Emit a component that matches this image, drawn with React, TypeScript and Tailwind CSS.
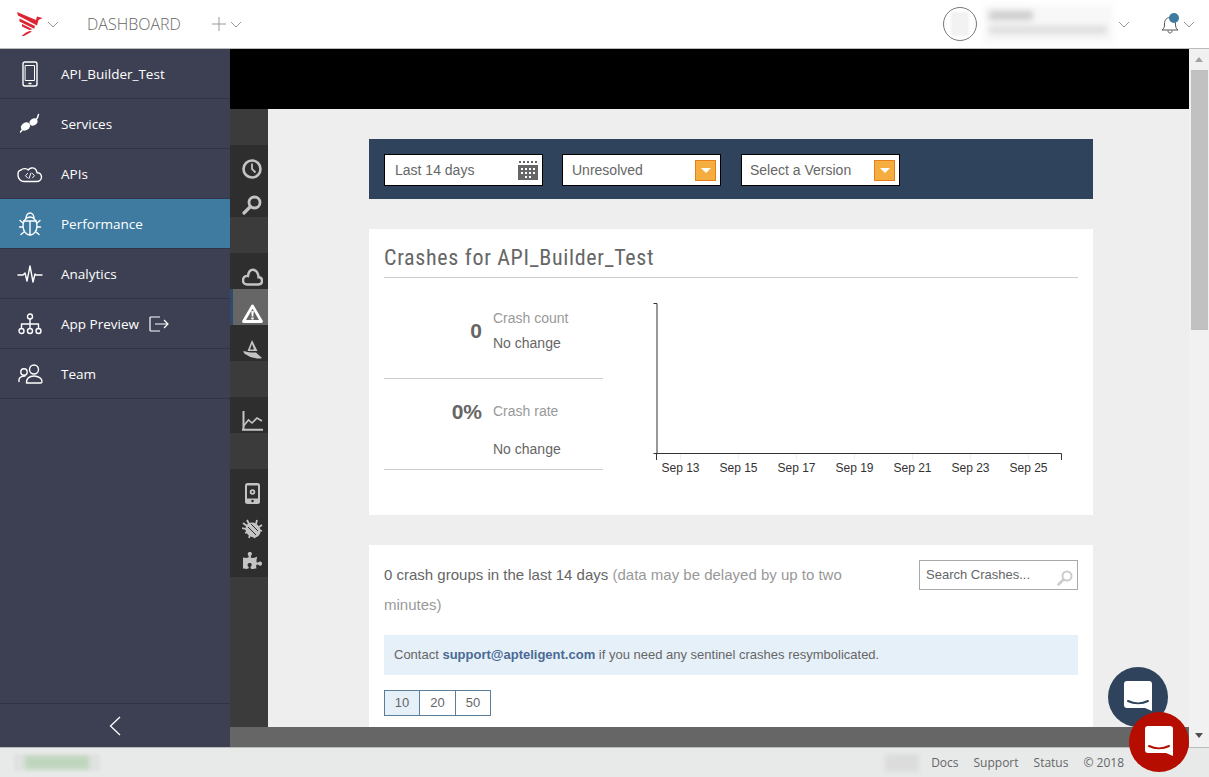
import { FaPuzzlePiece } from 'react-icons/fa';

const sans = 'font-["Open_Sans",sans-serif]';

function Chevron({ className = '' }: { className?: string }) {
  return (
    <svg width="12" height="7" viewBox="0 0 12 7" fill="none" stroke="#999" strokeWidth="1" className={className}>
      <path d="M1 1l5 5 5-5" />
    </svg>
  );
}

function Logo() {
  return (
    <svg width="26" height="24" viewBox="0 0 26 24" fill="#dc2433">
      <path d="M0 0l19 8 1-3.500 5.500 1.500-4 2-1.500 5.500L1 3.500z" />
      <path d="M2.500 6.500l15.500 7.500-.8 2.800L2.500 9.500z" />
      <path d="M5 12l10.500 5.300-3 .8L5 14.500z" />
      <path d="M12.500 19l2.500 .5L7 24H4.500l4.500-3.500z" />
    </svg>
  );
}

const ic = { fill: 'none', stroke: '#fff', strokeWidth: 1.4, strokeLinecap: 'round', strokeLinejoin: 'round' } as const;

const sideIcons: Record<string, React.ReactNode> = {
  phone: (
    <svg width="24" height="26" viewBox="0 0 24 26" {...ic}>
      <rect x="5" y="1" width="14" height="24" rx="2" stroke="#fff" />
      <rect x="7.5" y="4.5" width="9" height="15" stroke="#fff" strokeWidth="1" />
      <path d="M11 22.5h2" />
    </svg>
  ),
  plug: (
    <svg width="24" height="24" viewBox="0 0 24 24" fill="#fff">
      <ellipse cx="7.500" cy="14.500" rx="5" ry="3.800" transform="rotate(-35 7.500 14.500)" />
      <ellipse cx="15.500" cy="10" rx="4.200" ry="3.300" transform="rotate(-35 15.500 10)" />
      <path d="M18 8c1.500-1.500 2-3 2.500-5.500M2.500 20l2-2.500" fill="none" stroke="#fff" strokeWidth="1.400" strokeLinecap="round" />
    </svg>
  ),
  cloud: (
    <svg width="26" height="18" viewBox="0 0 26 18" {...ic}>
      <path d="M7 16.500h12.500c3 0 5-2 5-4.500s-2-4.500-4.500-4.300C19.500 4 17 2.500 14.500 3c-1.500.3-2.500 1-3.200 2C10 3.500 6 2.800 4 5c-3 .8-3 2.500-3 5 0 4 3 6.500 6 6.500z" />
      <path d="M10.500 8.500l-2 2.200 2 2.200M15.500 8.500l2 2.200-2 2.200M14 8l-2 5.500" strokeWidth="1" />
    </svg>
  ),
  bug: (
    <svg width="24" height="26" viewBox="0 0 24 26" {...ic}>
      <ellipse cx="12" cy="15" rx="7" ry="9" />
      <path d="M8 7.500C8 4 10 2 12 2s4 2 4 5.500M5.500 10h13M12 10v14" />
      <path d="M5 12L2 9.500M19 12l3-2.500M4.800 16H1.500M19.200 16h3.300M6 21l-3 2.500M18 21l3 2.500" />
    </svg>
  ),
  pulse: (
    <svg width="26" height="18" viewBox="0 0 26 18" {...ic}>
      <path d="M1 10h5l2-2 2 8 3-15 3 16 2-8 1 1h6" />
    </svg>
  ),
  tree: (
    <svg width="24" height="22" viewBox="0 0 24 22" {...ic}>
      <circle cx="12" cy="3.500" r="2.500" />
      <circle cx="3.500" cy="18" r="2.500" />
      <circle cx="12" cy="18" r="2.500" />
      <circle cx="20.500" cy="18" r="2.500" />
      <path d="M12 6v9.500M3.500 15.500V11h17v4.500" />
    </svg>
  ),
  team: (
    <svg width="25" height="20" viewBox="0 0 25 20" {...ic}>
      <circle cx="16" cy="5.500" r="4.500" />
      <path d="M8.500 19c0-4.500 3-7 7.500-7s8 2.500 8 5.500c0 1-.5 1.500-1.500 1.500z" />
      <circle cx="6" cy="8" r="3.200" />
      <path d="M1 17.500c-.5-3.500 1.500-5.500 6-5.500" />
    </svg>
  ),
};

const navItems = [
  { label: 'API_Builder_Test', icon: 'phone' },
  { label: 'Services', icon: 'plug' },
  { label: 'APIs', icon: 'cloud' },
  { label: 'Performance', icon: 'bug', active: true },
  { label: 'Analytics', icon: 'pulse' },
  { label: 'App Preview', icon: 'tree', exit: true },
  { label: 'Team', icon: 'team' },
];

function Sidebar() {
  return (
    <aside className={`flex w-[230px] shrink-0 flex-col bg-[#3d4052] ${sans}`}>
      {navItems.map((item) => (
        <div
          key={item.label}
          className={`flex h-[50px] items-center border-b border-[#30334a] text-[13.5px] text-white ${item.active ? 'bg-[#3f7ba0]' : ''}`}
        >
          <div className="flex w-[61px] justify-center pr-[1px]">{sideIcons[item.icon]}</div>
          <span className="pt-[1px]">{item.label}</span>
          {item.exit && (
            <svg width="20" height="16" viewBox="0 0 20 16" fill="none" stroke="#fff" strokeWidth="1.200" className="ml-[10px]">
              <path d="M11 1H2a1 1 0 0 0-1 1v12a1 1 0 0 0 1 1h9M6 8h13M15 4l4 4-4 4" />
            </svg>
          )}
        </div>
      ))}
      <div className="flex-1" />
      <div className="flex h-[44px] items-center justify-center border-t border-[#30334a]">
        <svg width="12" height="20" viewBox="0 0 12 20" fill="none" stroke="#fff" strokeWidth="1.300">
          <path d="M11 1L1.500 10l9.500 9" />
        </svg>
      </div>
    </aside>
  );
}

const g = '#c4c4c4';

function RailBand({ light, h, children, className = '' }: { light?: boolean; h: string; children?: React.ReactNode; className?: string }) {
  return <div className={`flex flex-col items-center ${h} ${light ? 'bg-[#3b3b3b]' : 'bg-[#2e2e2e]'} ${className}`}>{children}</div>;
}

function RailSlot({ children }: { children: React.ReactNode }) {
  return <div className="flex h-[36px] w-full items-center justify-center pt-[12px] pl-[6px]">{children}</div>;
}

function Rail() {
  return (
    <div className="flex w-[38px] shrink-0 flex-col bg-[#3b3b3b]">
      <RailBand light h="h-[36px]" />
      <RailBand h="h-[72px]">
        <RailSlot>
          <svg width="20" height="20" viewBox="0 0 20 20" fill="none" stroke={g} strokeWidth="2.600">
            <circle cx="10" cy="10" r="8.500" />
            <path d="M10 4.500V10l3.500 3.500" strokeWidth="1.800" />
          </svg>
        </RailSlot>
        <RailSlot>
          <svg width="20" height="20" viewBox="0 0 20 20" fill="none" stroke={g} strokeWidth="2.800" strokeLinecap="round">
            <circle cx="12.500" cy="7.500" r="5.500" />
            <path d="M8.500 11.500L2 18" strokeWidth="3.200" />
          </svg>
        </RailSlot>
      </RailBand>
      <RailBand light h="h-[36px]" />
      <RailBand h="h-[108px]">
        <RailSlot>
          <svg width="21" height="18" viewBox="0 0 21 18" fill="none" stroke={g} strokeWidth="2.400">
            <path d="M5 16.500h11c2.500 0 4-1.500 4-3.700 0-2-1.500-3.500-3.500-3.500 0-4-2.500-7.500-5.500-7.500S6.500 4 6 8c-3-.5-5 1.500-5 4.300 0 2.700 2 4.200 4 4.200z" />
          </svg>
        </RailSlot>
        <div className="flex h-[36px] w-full items-center justify-center border-l-[3px] border-[#2f4a6b] bg-[#666] pt-[12px] pl-[3px]">
          <svg width="21" height="19" viewBox="0 0 21 19">
            <path d="M10.500 2L1.500 17.500h18z" fill="none" stroke="#fff" strokeWidth="2.800" strokeLinejoin="round" />
            <path d="M9.300 7h2.400l-.4 5.500H9.700zM9.300 13.500h2.400v2H9.300z" fill="#fff" />
          </svg>
        </div>
        <RailSlot>
          <svg width="21" height="19" viewBox="0 0 21 19" fill={g}>
            <path d="M10 0l5.500 11H5.500zM10 4L8 9.500h4z" fillRule="evenodd" />
            <path d="M1 11.500c3-1 5 1.500 9 1h4l6 5.500c-3 1-5 .5-7 0-4-.5-7-2-8-3-2-.5-3-2-4-3.500z" />
          </svg>
        </RailSlot>
      </RailBand>
      <RailBand light h="h-[36px]" />
      <RailBand h="h-[36px]">
        <RailSlot>
          <svg width="21" height="20" viewBox="0 0 21 20" fill="none" stroke={g} strokeWidth="2">
            <path d="M1.500 0v18M0 18.700h21" />
            <path d="M1.500 15l5-6 3.500 3 5-5 5 3" strokeWidth="1.600" />
          </svg>
        </RailSlot>
      </RailBand>
      <RailBand light h="h-[36px]" />
      <RailBand h="h-[108px]">
        <RailSlot>
          <svg width="15" height="21" viewBox="0 0 15 21">
            <rect x="0" y="0" width="15" height="21" rx="2.500" fill={g} />
            <rect x="2" y="2.500" width="11" height="13" fill="#2e2e2e" />
            <circle cx="7.500" cy="9" r="2.800" fill={g} />
            <circle cx="7.500" cy="9" r="1" fill="#2e2e2e" />
            <circle cx="7.500" cy="18" r="1.300" fill="#2e2e2e" />
          </svg>
        </RailSlot>
        <RailSlot>
          <svg width="21" height="20" viewBox="0 0 21 20" fill="none" stroke={g}>
            <ellipse cx="11" cy="11" rx="8" ry="7" transform="rotate(40 11 11)" fill={g} stroke="none" />
            <path d="M6 8l8 8M9 5l7 7" stroke="#2e2e2e" strokeWidth="1" />
            <path d="M1 4l4 3M5 1l2 4M0 9l4 1M15 1l-1 4M20 6l-3 2M20 12l-3-1M3 14l3-1M7 19l1-3M13 19l-1-2" strokeWidth="1.800" />
          </svg>
        </RailSlot>
        <div className="flex h-[36px] w-full items-center justify-center pt-[2px] pl-[6px]">
          <FaPuzzlePiece size={19} color={g} />
        </div>
      </RailBand>
      <div className="flex-1" />
    </div>
  );
}

function OrangeCaret() {
  return (
    <div className="flex h-[21px] w-[21px] items-center justify-center border border-[#e67e1a] bg-[#f5ad40]">
      <div className="h-0 w-0 border-x-[5px] border-t-[5px] border-x-transparent border-t-white" />
    </div>
  );
}

function Calendar() {
  return (
    <svg width="20" height="20" viewBox="0 0 20 20" fill="#666">
      <path d="M1 1h2v2H1zM5 1h2v2H5zM9 1h2v2H9zM13 1h2v2h-2zM17 1h2v2h-2z" />
      <path d="M0 5h20v15H0zM3 8v2h2V8zM7 8v2h2V8zM11 8v2h2V8zM15 8v2h2V8zM3 12v2h2v-2zM7 12v2h2v-2zM11 12v2h2v-2zM15 12v2h2v-2zM7 16v2h2v-2zM11 16v2h2v-2z" fillRule="evenodd" />
    </svg>
  );
}

function FilterBox({ label, children, pad = 'pl-[8px]' }: { label: string; children: React.ReactNode; pad?: string }) {
  return (
    <div className={`flex h-[32px] w-[159px] items-center justify-between border border-black bg-white pr-[4px] text-[14px] text-[#666] ${pad}`}>
      <span>{label}</span>
      {children}
    </div>
  );
}

function Stat({ value, label, h, valueTop, labelTop, gap }: { value: string; label: string; h: string; valueTop: string; labelTop: string; gap: string }) {
  return (
    <div className={`flex border-b border-[#ccc] ${h}`}>
      <div className={`w-[98px] text-right text-[21px] leading-[30px] font-bold text-[#666] ${valueTop}`}>{value}</div>
      <div className="pl-[11px]">
        <div className={`text-[14px] leading-[18px] text-[#999] ${labelTop}`}>{label}</div>
        <div className={`text-[14px] leading-[18px] text-[#666] ${gap}`}>No change</div>
      </div>
    </div>
  );
}

function Chart() {
  const labels = ['Sep 13', 'Sep 15', 'Sep 17', 'Sep 19', 'Sep 21', 'Sep 23', 'Sep 25'];
  return (
    <svg width="420" height="180" viewBox="0 0 420 180" className="ml-[50px] mt-[24px]">
      {labels.map((l, i) => (
        <g key={l}>
          <path d={`M${27.5 + i * 58} 151v7`} stroke="#eee" />
          <text x={27.5 + i * 58} y="170" textAnchor="middle" fontSize="12" fill="#333">{l}</text>
        </g>
      ))}
      <path d="M0.500 1.500h3.500V151.500M0.500 151.500H408.500v6.500M3.500 151.500v6.500" fill="none" stroke="#333" strokeWidth="1" />
    </svg>
  );
}

function Content() {
  return (
    <div className="min-w-0 flex-1 overflow-hidden bg-[#eee] pt-[30px] pl-[101px] font-['Liberation_Sans',sans-serif]">
      <div className="w-[724px]">
        <div className="flex h-[60px] items-start gap-[19px] bg-[#2f435c] pt-[15px] pl-[15px]">
          <FilterBox label="Last 14 days" pad="pl-[10px]"><Calendar /></FilterBox>
          <FilterBox label="Unresolved" pad="pl-[9px]"><OrangeCaret /></FilterBox>
          <div className="ml-[1px]">
            <FilterBox label="Select a Version"><OrangeCaret /></FilterBox>
          </div>
        </div>

        <div className="mt-[30px] h-[286px] bg-white px-[15px]">
          <h2 className="h-[49px] border-b border-[#ccc] pt-[14px] font-['Roboto_Condensed','Roboto',sans-serif] text-[22px] leading-[30px] tracking-[0.68px] text-[#666] [font-stretch:condensed]">
            Crashes for API_Builder_Test
          </h2>
          <div className="flex">
            <div className="w-[219px] pt-[16px]">
              <Stat value="0" label="Crash count" h="h-[85px]" valueTop="pt-[22px]" labelTop="pt-[15px]" gap="mt-[7px]" />
              <Stat value="0%" label="Crash rate" h="h-[91px]" valueTop="pt-[18px]" labelTop="pt-[23px]" gap="mt-[20px]" />
            </div>
            <Chart />
          </div>
        </div>

        <div className="mt-[30px] bg-white px-[15px] pt-[15px] pb-[40px]">
          <div className="flex justify-between">
            <p className="text-[15px] leading-[30px] text-[#999]">
              <span className="text-[#666]">0 crash groups in the last 14 days</span> (data may be delayed by up to two
              <br />
              minutes)
            </p>
            <div className="flex h-[30px] w-[159px] items-center justify-between border border-[#aaa] pr-[4px] pl-[6px] text-[13px] text-[#666]">
              <span>Search Crashes...</span>
              <svg width="16" height="16" viewBox="0 0 16 16" fill="none" stroke="#ccc" strokeWidth="2" strokeLinecap="round" className="mt-[5px]">
                <circle cx="10" cy="6" r="4.500" />
                <path d="M6.500 9.500L1.500 14.500" strokeWidth="2.500" />
              </svg>
            </div>
          </div>
          <div className="mt-[15px] flex h-[40px] items-center bg-[#e6f0f9] pl-[10px] text-[13px] text-[#666]">
            <span>Contact <b className="text-[#4a6a94]">support@apteligent.com</b> if you need any sentinel crashes resymbolicated.</span>
          </div>
          <div className="mt-[15px] flex h-[26px] w-[107px] border border-[#5a7d99] text-[13px] text-[#666]">
            <div className="flex w-[35px] items-center justify-center border-r border-[#5a7d99] bg-[#e6f0f9]">10</div>
            <div className="flex w-[36px] items-center justify-center border-r border-[#5a7d99]">20</div>
            <div className="flex flex-1 items-center justify-center">50</div>
          </div>
        </div>
      </div>
    </div>
  );
}

function ChatBubble({ smile, className }: { smile: string; className: string }) {
  return (
    <div className={`absolute flex h-[60px] w-[60px] items-center justify-center rounded-full ${className}`}>
      <svg width="28" height="32" viewBox="0 0 28 32">
        <path d="M3 0h22a3 3 0 0 1 3 3v27l-7-3H3a3 3 0 0 1-3-3V3a3 3 0 0 1 3-3z" fill="#fff" />
        <path d="M4 20c6 3 14 3 20 0" fill="none" stroke={smile} strokeWidth="2" strokeLinecap="round" />
      </svg>
    </div>
  );
}

export default function App() {
  return (
    <div className={`relative flex h-[777px] w-[1209px] flex-col overflow-hidden bg-white ${sans}`}>
      {/* Header */}
      <header className="flex h-[49px] shrink-0 items-center border-b border-[#bbb] bg-white">
        <div className="ml-[17px] flex items-center gap-[4px]">
          <Logo />
          <Chevron />
        </div>
        <span className="ml-[28px] text-[16px] font-light text-[#666]">DASHBOARD</span>
        <svg width="14" height="14" viewBox="0 0 14 14" stroke="#999" className="ml-[31px]">
          <path d="M7 0v14M0 7h14" />
        </svg>
        <Chevron className="ml-[4px]" />
        <div className="ml-auto flex h-[34px] w-[34px] items-center justify-center rounded-full border border-[#777]">
          <div className="h-[24px] w-[18px] bg-[#f2f2f2] blur-[1px]" />
        </div>
        <div className="ml-[7px] flex h-[38px] w-[129px] flex-col gap-[6px] bg-[#f8f8f8] pt-[6px] pl-[5px] blur-[3px]">
          <div className="h-[9px] w-[44px] bg-[#ccc]" />
          <div className="h-[8px] w-[118px] bg-[#ddd]" />
        </div>
        <Chevron className="ml-[5px]" />
        <div className="relative ml-[31px] mr-[14px] flex items-center gap-[4px]">
          <svg width="18" height="20" viewBox="0 0 18 20" fill="none" stroke="#555" strokeWidth="1">
            <path d="M1 16h16c-2-1.500-2.500-3-2.500-6 0-4-2-6.500-5.500-6.500S3.500 6 3.500 10c0 3-.5 4.500-2.500 6zM7 16.500c0 2 1 2.500 2 2.500s2-.5 2-2.500" />
          </svg>
          <Chevron />
          <div className="absolute top-[-1px] left-[8px] h-[10px] w-[10px] rounded-full bg-[#3f7ba0]" />
        </div>
      </header>

      {/* Body */}
      <div className="flex min-h-0 flex-1">
        <Sidebar />
        <div className="flex min-w-0 flex-1 flex-col">
          <div className="h-[60px] shrink-0 bg-black" />
          <div className="flex min-h-0 flex-1">
            <Rail />
            <Content />
          </div>
          <div className="h-[20px] shrink-0 bg-[#666]" />
        </div>
        {/* Scrollbar */}
        <div className="flex w-[20px] shrink-0 flex-col items-center bg-[#f1f1f1]">
          <div className="flex h-[21px] items-center"><div className="h-0 w-0 border-x-[4px] border-b-[5px] border-x-transparent border-b-[#a3a3a3]" /></div>
          <div className="h-[260px] w-[17px] bg-[#c1c1c1]" />
          <div className="flex-1" />
          <div className="flex h-[24px] items-center"><div className="h-0 w-0 border-x-[4px] border-t-[5px] border-x-transparent border-t-[#505050]" /></div>
        </div>
      </div>

      {/* Footer */}
      <footer className="flex h-[30px] shrink-0 items-center border-t border-[#bbb] bg-[#e8eaea] text-[12px] text-[#666]">
        <div className="ml-[14px] flex h-[17px] w-[86px] items-center justify-center bg-[#e0e2e0] blur-[1px]">
          <div className="h-[13px] w-[64px] bg-[#bed6bc] blur-[2px]" />
        </div>
        <div className="ml-auto h-[18px] w-[34px] bg-[#dcdcdc] blur-[2px]" />
        <span className="ml-[12px]">Docs</span>
        <span className="ml-[15px]">Support</span>
        <span className="ml-[15px]">Status</span>
        <span className="ml-[15px] mr-[85px]">© 2018</span>
      </footer>

      <ChatBubble smile="#2f435c" className="left-[1108px] top-[667px] bg-[#2f435c]" />
      <ChatBubble smile="#b50d00" className="left-[1129px] top-[712px] bg-[#b50d00]" />
    </div>
  );
}
